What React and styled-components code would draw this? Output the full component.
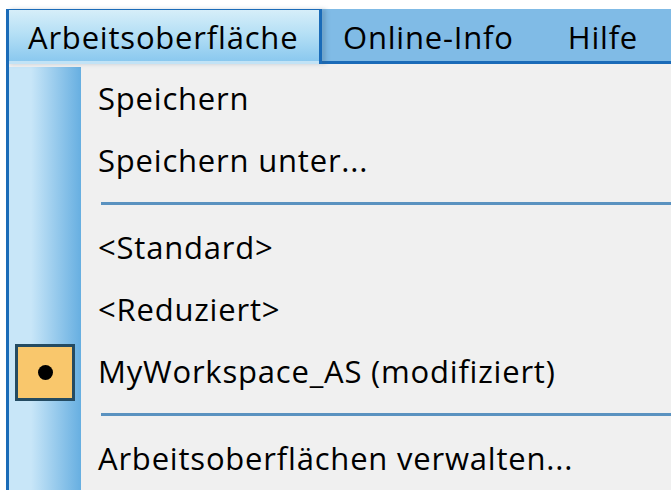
import React from 'react'
import styled, { createGlobalStyle } from 'styled-components'

const GlobalStyle = createGlobalStyle`
	html, body {
		margin: 0;
		padding: 0;
		background: #ffffff;
		overflow: hidden;
	}
	body {
		font-family: "Open Sans", "Noto Sans", "Liberation Sans", sans-serif;
		font-size: 31px;
		color: #000;
	}
`

const Window = styled.div`
	width: 671px;
	height: 490px;
	padding: 9px 0 0 6px;
	box-sizing: border-box;
	display: flex;
	flex-direction: column;
`

const MenuBar = styled.div`
	display: flex;
	align-items: stretch;
	height: 55px;
	background: #80bbe6;
	box-shadow: inset 0 -3px 0 #1a6bb8;
	flex-shrink: 0;
`

const BarItem = styled.div`
	display: flex;
	align-items: center;
	box-sizing: border-box;
	padding: 0 21px 0 ${props => props.$pad || 21}px;
	white-space: nowrap;
	letter-spacing: 0.8px;
	${props => props.$open && `
		width: 316px;
		padding-left: 19px;
		border: 3px solid #1a6bb8;
		border-top-width: 1px;
		border-bottom: none;
		background: linear-gradient(to bottom, #d6eef9 0%, #b4dff5 45%, #86c6ee 100%);
		box-shadow: inset 0 -3px 0 #c2e3f6, 4px 0 4px rgba(60, 90, 120, 0.25);
		position: relative;
		z-index: 1;
	`}
`

const Dropdown = styled.div`
	flex: 1;
	display: flex;
	flex-direction: column;
	border-left: 3px solid #1a6bb8;
	background: #f0f0f0;
	padding-top: 3px;
`

const List = styled.div`
	flex: 1;
	background:
		linear-gradient(to right, #c8e6f8 0px, #c8e6f8 22px, #67afe1 72px, transparent 72px),
		#f0f0f0;
`

const Row = styled.div`
	display: flex;
	align-items: flex-start;
	height: 62px;
`

const IconCell = styled.div`
	width: 72px;
	height: 100%;
	flex-shrink: 0;
	display: flex;
	justify-content: center;
	padding-top: 4px;
	box-sizing: border-box;
`

const Label = styled.div`
	padding-left: 17px;
	height: 62px;
	line-height: 62px;
	white-space: nowrap;
	letter-spacing: 0.8px;
`

const Check = styled.div`
	width: 60px;
	height: 57px;
	box-sizing: border-box;
	border: 3px solid #244b62;
	background: #f9c76c;
	display: flex;
	align-items: center;
	justify-content: center;

	&::after {
		content: '';
		width: 15px;
		height: 15px;
		border-radius: 50%;
		background: #000;
	}
`

const Separator = styled.div`
	height: 25px;
	display: flex;
	align-items: center;
	padding-left: 92px;

	&::after {
		content: '';
		flex: 1;
		height: 3px;
		background: #5a92c0;
	}
`

const MenuRow = ({ checked, children }) => (
	<Row>
		<IconCell>{checked && <Check />}</IconCell>
		<Label>{children}</Label>
	</Row>
)

const App = () => {
	return (
		<Window>
			<GlobalStyle />
			<MenuBar>
				<BarItem $open>Arbeitsoberfläche</BarItem>
				<BarItem>Online-Info</BarItem>
				<BarItem $pad={33}>Hilfe</BarItem>
			</MenuBar>
			<Dropdown>
				<List>
					<MenuRow>Speichern</MenuRow>
					<MenuRow>Speichern unter...</MenuRow>
					<Separator />
					<MenuRow>&lt;Standard&gt;</MenuRow>
					<MenuRow>&lt;Reduziert&gt;</MenuRow>
					<MenuRow checked>MyWorkspace_AS (modifiziert)</MenuRow>
					<Separator />
					<MenuRow>Arbeitsoberflächen verwalten...</MenuRow>
				</List>
			</Dropdown>
		</Window>
	)
}

export default App
